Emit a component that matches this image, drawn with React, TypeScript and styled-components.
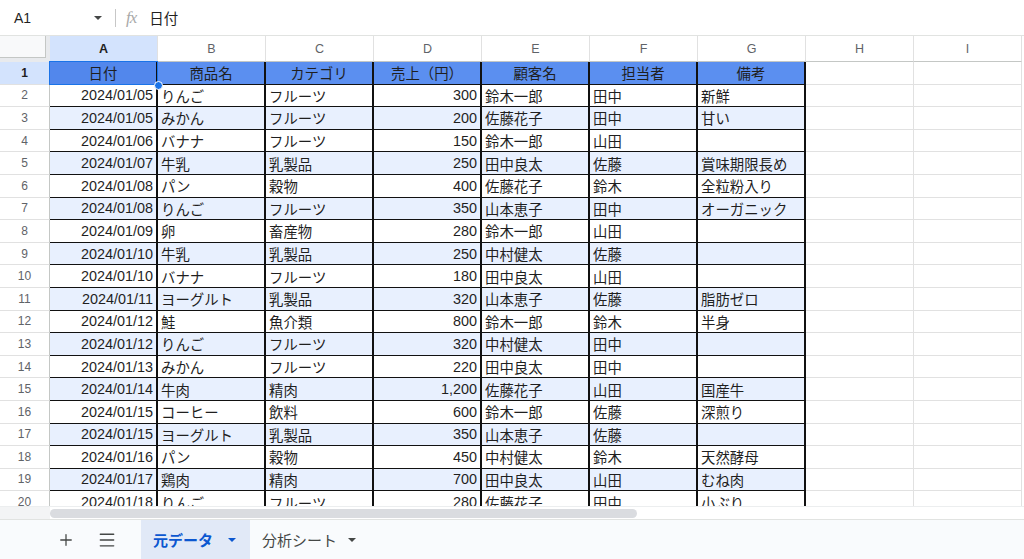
import React from 'react';
import styled, { createGlobalStyle } from 'styled-components';
import { Plus, Menu } from 'lucide-react';

const COL_W = 108;
const ROW_H = 22.6;
const HEAD_W = 50;

const GlobalStyle = createGlobalStyle`
  html, body {
    margin: 0;
    padding: 0;
  }
  body {
    font-family: "Liberation Sans", Arial, "Noto Sans CJK JP", sans-serif;
    background: #fff;
    color: #1f1f1f;
    overflow: hidden;
  }
`;

const Page = styled.div`
  width: 1024px;
  height: 559px;
  display: flex;
  flex-direction: column;
  overflow: hidden;
`;

const FormulaBar = styled.div`
  height: 36px;
  flex-shrink: 0;
  display: flex;
  align-items: center;
  border-bottom: 1px solid #e1e3e1;
  box-sizing: border-box;
`;

const NameBox = styled.div`
  width: 88px;
  padding-left: 14px;
  display: flex;
  align-items: center;
  justify-content: space-between;
  font-size: 14px;
  color: #1f1f1f;
`;

const Caret = styled.span<{ $color?: string }>`
  display: inline-block;
  width: 0;
  height: 0;
  border-left: 4px solid transparent;
  border-right: 4px solid transparent;
  border-top: 4px solid ${p => p.$color || '#444746'};
`;

const Divider = styled.span`
  width: 1px;
  height: 18px;
  background: #c7c7c7;
  margin: 0 10px 0 13px;
`;

const Fx = styled.span`
  font-family: "Liberation Serif", "Times New Roman", serif;
  font-style: italic;
  font-size: 17px;
  color: #a9a9a9;
  letter-spacing: -1px;
`;

const FormulaText = styled.span`
  margin-left: 13px;
  font-size: 14.5px;
  font-family: "Noto Sans CJK JP", sans-serif;
`;

const Grid = styled.div`
  flex: 1;
  overflow: hidden;
  position: relative;
`;

const Row = styled.div<{ $h: number }>`
  display: flex;
  height: ${p => p.$h}px;
`;

const Corner = styled.div`
  width: ${HEAD_W}px;
  flex-shrink: 0;
  box-sizing: border-box;
  background: #f8f9fa;
  border-right: 4px solid #e8eaed;
  border-bottom: 4px solid #e8eaed;
  box-shadow: inset -1px -1px 0 #c4c7c5;
`;

const ColHead = styled.div<{ $active?: boolean }>`
  width: ${COL_W}px;
  flex-shrink: 0;
  box-sizing: border-box;
  display: flex;
  align-items: center;
  justify-content: center;
  font-size: 12.5px;
  background: ${p => (p.$active ? '#d3e3fd' : '#fff')};
  color: ${p => (p.$active ? '#1f1f1f' : '#5f6368')};
  font-weight: ${p => (p.$active ? 700 : 400)};
  border-right: 1px solid #e1e1e1;
  border-bottom: 1px solid #c4c7c5;
`;

const RowHead = styled.div<{ $active?: boolean }>`
  width: ${HEAD_W}px;
  flex-shrink: 0;
  box-sizing: border-box;
  display: flex;
  align-items: center;
  justify-content: center;
  font-size: 12px;
  background: ${p => (p.$active ? '#d3e3fd' : '#fff')};
  color: ${p => (p.$active ? '#1f1f1f' : '#5f6368')};
  font-weight: ${p => (p.$active ? 700 : 400)};
  border-right: 1px solid #c4c7c5;
  border-bottom: 1px solid #e1e1e1;
`;

type Kind = 'head' | 'data' | 'empty';

const Cell = styled.div<{ $kind: Kind; $stripe?: boolean; $right?: boolean; $selected?: boolean }>`
  position: relative;
  width: ${COL_W}px;
  flex-shrink: 0;
  box-sizing: border-box;
  display: flex;
  align-items: center;
  padding: 0 3px;
  white-space: nowrap;
  overflow: hidden;
  font-size: 14.4px;
  color: #1f1f1f;
  justify-content: ${p => (p.$kind === 'head' ? 'center' : p.$right ? 'flex-end' : 'flex-start')};
  background: ${p =>
    p.$kind === 'head' ? (p.$selected ? '#5287ec' : '#5b8ff0') : p.$stripe ? '#e8f0fe' : '#fff'};
  border-right: ${p => (p.$kind === 'empty' ? '1px solid #e1e1e1' : '2px solid #111')};
  border-bottom: ${p => (p.$kind === 'empty' ? '1px solid #e1e1e1' : '1px solid #111')};
  ${p =>
    p.$selected &&
    `
    overflow: visible;
    &::after {
      content: '';
      position: absolute;
      inset: -1px -2px -1px -1px;
      border: 1.5px solid #1a73e8;
      pointer-events: none;
    }
  `}
`;

const Handle = styled.span`
  position: absolute;
  right: -7px;
  bottom: -6px;
  width: 7px;
  height: 7px;
  border-radius: 50%;
  background: #1a73e8;
  border: 1.5px solid #fff;
  z-index: 2;
`;

const ScrollStrip = styled.div`
  height: 13px;
  flex-shrink: 0;
  display: flex;
  align-items: center;
  background: #fff;
  border-top: 1px solid #eceeef;
  box-sizing: border-box;
`;

const StripLead = styled.div`
  width: 50px;
  height: 100%;
  background: #f3f4f5;
`;

const Thumb = styled.div`
  width: 587px;
  height: 9px;
  border-radius: 5px;
  background: #dadce0;
`;

const TabBar = styled.div`
  height: 40px;
  flex-shrink: 0;
  display: flex;
  align-items: stretch;
  background: #f9fbfd;
  border-top: 1px solid #e1e3e1;
  box-sizing: border-box;
  padding-left: 55px;
`;

const IconButton = styled.div`
  width: 21px;
  display: flex;
  align-items: center;
  justify-content: center;
  color: #444746;
  margin-right: 20px;
`;

const Tabs = styled.div`
  display: flex;
  margin-left: 4px;
`;

const SheetTab = styled.div<{ $active?: boolean }>`
  display: flex;
  align-items: center;
  gap: ${p => (p.$active ? '15px' : '11px')};
  padding: 0 ${p => (p.$active ? '14px' : '12px')} 0 12px;
  font-family: "Noto Sans CJK JP", sans-serif;
  font-size: 15px;
  font-weight: ${p => (p.$active ? 700 : 400)};
  color: ${p => (p.$active ? '#0b57d0' : '#444746')};
  background: ${p => (p.$active ? '#e1e9f7' : 'transparent')};
`;

const headers = ['日付', '商品名', 'カテゴリ', '売上（円）', '顧客名', '担当者', '備考'];
const letters = ['A', 'B', 'C', 'D', 'E', 'F', 'G', 'H', 'I'];

const rows: string[][] = [
  ['2024/01/05', 'りんご', 'フルーツ', '300', '鈴木一郎', '田中', '新鮮'],
  ['2024/01/05', 'みかん', 'フルーツ', '200', '佐藤花子', '田中', '甘い'],
  ['2024/01/06', 'バナナ', 'フルーツ', '150', '鈴木一郎', '山田', ''],
  ['2024/01/07', '牛乳', '乳製品', '250', '田中良太', '佐藤', '賞味期限長め'],
  ['2024/01/08', 'パン', '穀物', '400', '佐藤花子', '鈴木', '全粒粉入り'],
  ['2024/01/08', 'りんご', 'フルーツ', '350', '山本恵子', '田中', 'オーガニック'],
  ['2024/01/09', '卵', '畜産物', '280', '鈴木一郎', '山田', ''],
  ['2024/01/10', '牛乳', '乳製品', '250', '中村健太', '佐藤', ''],
  ['2024/01/10', 'バナナ', 'フルーツ', '180', '田中良太', '山田', ''],
  ['2024/01/11', 'ヨーグルト', '乳製品', '320', '山本恵子', '佐藤', '脂肪ゼロ'],
  ['2024/01/12', '鮭', '魚介類', '800', '鈴木一郎', '鈴木', '半身'],
  ['2024/01/12', 'りんご', 'フルーツ', '320', '中村健太', '田中', ''],
  ['2024/01/13', 'みかん', 'フルーツ', '220', '田中良太', '田中', ''],
  ['2024/01/14', '牛肉', '精肉', '1,200', '佐藤花子', '山田', '国産牛'],
  ['2024/01/15', 'コーヒー', '飲料', '600', '鈴木一郎', '佐藤', '深煎り'],
  ['2024/01/15', 'ヨーグルト', '乳製品', '350', '山本恵子', '佐藤', ''],
  ['2024/01/16', 'パン', '穀物', '450', '中村健太', '鈴木', '天然酵母'],
  ['2024/01/17', '鶏肉', '精肉', '700', '田中良太', '山田', 'むね肉'],
  ['2024/01/18', 'りんご', 'フルーツ', '280', '佐藤花子', '田中', '小ぶり'],
];

export default function App() {
  return (
    <Page>
      <GlobalStyle />
      <FormulaBar>
        <NameBox>
          A1
          <Caret />
        </NameBox>
        <Divider />
        <Fx>fx</Fx>
        <FormulaText>日付</FormulaText>
      </FormulaBar>

      <Grid>
        <Row $h={26}>
          <Corner />
          {letters.map(l => (
            <ColHead key={l} $active={l === 'A'}>
              {l}
            </ColHead>
          ))}
        </Row>

        <Row $h={ROW_H}>
          <RowHead $active>1</RowHead>
          {headers.map((h, i) => (
            <Cell key={h} $kind="head" $selected={i === 0}>
              {h}
              {i === 0 && <Handle />}
            </Cell>
          ))}
          <Cell $kind="empty" />
          <Cell $kind="empty" />
        </Row>

        {rows.map((r, ri) => (
          <Row key={ri} $h={ROW_H}>
            <RowHead>{ri + 2}</RowHead>
            {r.map((v, ci) => (
              <Cell key={ci} $kind="data" $stripe={ri % 2 === 1} $right={ci === 0 || ci === 3}>
                {v}
              </Cell>
            ))}
            <Cell $kind="empty" />
            <Cell $kind="empty" />
          </Row>
        ))}
      </Grid>

      <ScrollStrip>
        <StripLead />
        <Thumb />
      </ScrollStrip>

      <TabBar>
        <IconButton>
          <Plus size={18} strokeWidth={1.7} />
        </IconButton>
        <IconButton>
          <Menu size={20} strokeWidth={1.7} />
        </IconButton>
        <Tabs>
          <SheetTab $active>
            元データ
            <Caret $color="#0b57d0" />
          </SheetTab>
          <SheetTab>
            分析シート
            <Caret />
          </SheetTab>
        </Tabs>
      </TabBar>
    </Page>
  );
}
